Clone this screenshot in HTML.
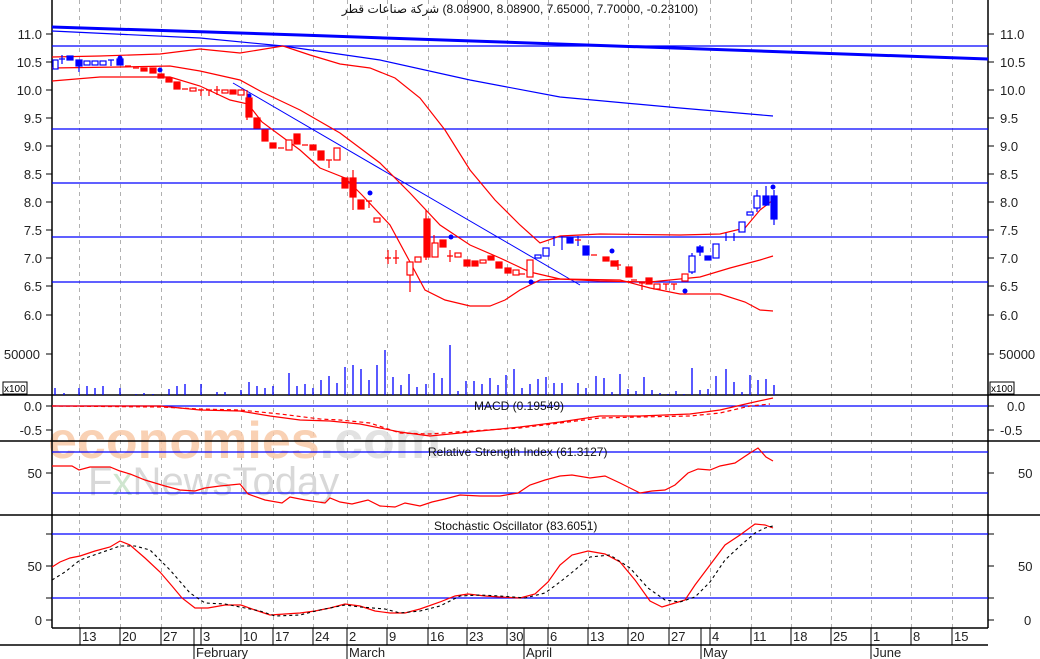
<!DOCTYPE html>
<html><head><meta charset="utf-8"><style>
html,body{margin:0;padding:0;background:#fff;width:1040px;height:659px;overflow:hidden;position:relative}
svg{display:block;font-family:"Liberation Sans","Noto Sans CJK SC",sans-serif}
#t{position:absolute;left:0;top:2px;width:1040px;text-align:center;font:12px "Liberation Sans","DejaVu Sans",sans-serif;color:#111;direction:ltr;unicode-bidi:isolate}
</style></head><body>
<svg width="1040" height="659" viewBox="0 0 1040 659" xmlns="http://www.w3.org/2000/svg">
<rect width="1040" height="659" fill="#fff"/>
<g stroke="#b0b0b0" stroke-dasharray="4,4" stroke-width="1">
<path d="M79.5 0V628M120.5 0V628M161.5 0V628M201.5 0V628M241.5 0V628M273.5 0V628M313.5 0V628M347.5 0V628M387.5 0V628M428.5 0V628M467.5 0V628M507.5 0V628M548.5 0V628M588.5 0V628M628.5 0V628M669.5 0V628M710.5 0V628M751.5 0V628M791.5 0V628M831.5 0V628M871.5 0V628M911.5 0V628M952.5 0V628"/>
</g>
<text x="48" y="458" font-size="52" fill="#f9c9a8" font-weight="bold" opacity="0.85">economies<tspan fill="#dedede">.com</tspan></text>
<text x="88" y="495" font-size="40" fill="#d8d8d8">F<tspan fill="#cfe6cf">x</tspan>NewsToday</text>
<g stroke="#000" stroke-width="1.5" fill="none">
<path d="M52 0V628M988 0V628M0 395H1040M0 441H1040M0 515H1040M52 628H988M0 645H988"/>
</g>
<g stroke="#000" stroke-width="1">
<path d="M46 34H52M46 62H52M46 90H52M46 118H52M46 146H52M46 174H52M46 202H52M46 230H52M46 258H52M46 286H52M46 315H52M46 354H52M46 406H52M46 430H52M46 473H52M46 566H52M46 620H52M46 598H52M46 534H52"/>
<path d="M988 34H994M988 62H994M988 90H994M988 118H994M988 146H994M988 174H994M988 202H994M988 230H994M988 258H994M988 286H994M988 315H994M988 354H994M988 406H994M988 430H994M988 473H994M988 566H994M988 620H994M988 598H994M988 534H994"/>
<path d="M80 628V645M120 628V645M161 628V645M194 628V659M201 628V645M241 628V645M273 628V645M313 628V645M347 628V659M387 628V645M428 628V645M467 628V645M507 628V645M524 628V659M548 628V645M588 628V645M628 628V645M669 628V645M701 628V659M710 628V645M751 628V645M791 628V645M831 628V645M871 628V659M911 628V645M952 628V645"/>
</g>
<g font-size="13" fill="#222" text-anchor="end">
<text x="42" y="39">11.0</text><text x="42" y="67">10.5</text><text x="42" y="95">10.0</text><text x="42" y="123">9.5</text><text x="42" y="151">9.0</text><text x="42" y="179">8.5</text><text x="42" y="207">8.0</text><text x="42" y="235">7.5</text><text x="42" y="263">7.0</text><text x="42" y="291">6.5</text><text x="42" y="320">6.0</text><text x="40" y="359">50000</text>
<text x="42" y="411">0.0</text><text x="42" y="435">-0.5</text><text x="42" y="478">50</text><text x="42" y="571">50</text><text x="42" y="625">0</text>
</g>
<g font-size="13" fill="#222">
<text x="1000" y="39">11.0</text><text x="1000" y="67">10.5</text><text x="1000" y="95">10.0</text><text x="1000" y="123">9.5</text><text x="1000" y="151">9.0</text><text x="1000" y="179">8.5</text><text x="1000" y="207">8.0</text><text x="1000" y="235">7.5</text><text x="1000" y="263">7.0</text><text x="1000" y="291">6.5</text><text x="1000" y="320">6.0</text><text x="999" y="359">50000</text>
<text x="1007" y="411">0.0</text><text x="1000" y="435">-0.5</text><text x="1018" y="478">50</text><text x="1018" y="571">50</text><text x="1024" y="625">0</text>
</g>
<rect x="3" y="382" width="24" height="12" fill="#fff" stroke="#000"/><text x="4" y="392" font-size="10">x100</text>
<rect x="990" y="382" width="24" height="12" fill="#fff" stroke="#000"/><text x="991" y="392" font-size="10">x100</text>
<g font-size="13" fill="#222">
<text x="82" y="641">13</text><text x="122" y="641">20</text><text x="163" y="641">27</text><text x="203" y="641">3</text><text x="243" y="641">10</text><text x="275" y="641">17</text><text x="315" y="641">24</text><text x="349" y="641">2</text><text x="389" y="641">9</text><text x="430" y="641">16</text><text x="469" y="641">23</text><text x="509" y="641">30</text><text x="550" y="641">6</text><text x="590" y="641">13</text><text x="630" y="641">20</text><text x="671" y="641">27</text><text x="712" y="641">4</text><text x="753" y="641">11</text><text x="793" y="641">18</text><text x="833" y="641">25</text><text x="873" y="641">1</text><text x="913" y="641">8</text><text x="954" y="641">15</text>
<text x="196" y="657">February</text><text x="349" y="657">March</text><text x="526" y="657">April</text><text x="703" y="657">May</text><text x="873" y="657">June</text>
</g>
<g stroke="#0000ff" stroke-width="1.3">
<path d="M52 46H988M52 129H988M52 183H988M52 237H988M52 282H988M52 406H988M52 452H988M52 493H988M52 534H988M52 598H988"/>
</g>
<path d="M52 27L300 35L988 59" stroke="#0000ff" stroke-width="3" fill="none"/>
<path d="M52 31L200 38L283 46L380 60L470 80L560 97L680 108L773 116" stroke="#0000ff" stroke-width="1.2" fill="none"/>
<path d="M233 83L580 285" stroke="#0000ff" stroke-width="1" fill="none"/>
<g stroke="#f00" stroke-width="1.2" fill="none">
<path d="M52 57L100 56L160 54L200 49L240 53L283 46L310 55L340 64L370 68L395 78L420 98L445 130L470 170L495 200L520 225L540 243L560 236L600 234L680 235L720 234L745 228L760 210L773 200"/>
<path d="M52 68L120 67L170 66L200 71L240 80L262 92L300 110L340 133L380 163L410 193L440 225L470 245L500 258L530 272L560 279L600 281L650 282L700 277L730 268L760 260L773 256"/>
<path d="M52 81L100 77L170 77L200 86L230 100L248 104L262 122L300 150L320 168L345 178L362 195L390 225L410 262L425 290L445 300L470 306L490 306L505 300L520 290L540 280L560 279L620 280L650 288L680 294L720 294L745 302L760 310L773 311"/>
</g>
<g fill="#0000ff" stroke="#0000ff" stroke-width="1.2">
<rect x="53" y="60" width="5" height="9" fill="#fff"/>
<path d="M62 55V64M59 59H65M79 60V72M111 60V66M108 60H114M554 236V246M562 236V250M578 236V246M692 253V274M700 245V256M726 233V241M734 233V241M757 190V212M766 186V206"/>
<rect x="67" y="56" width="6" height="4"/><rect x="76" y="60" width="6" height="6"/>
<rect x="84" y="61" width="6" height="4" fill="#fff"/><rect x="92" y="61" width="6" height="4" fill="#fff"/><rect x="100" y="61" width="6" height="4" fill="#fff"/>
<rect x="117" y="59" width="6" height="6"/>
<rect x="535" y="255" width="6" height="3" fill="#fff"/><rect x="543" y="248" width="6" height="8" fill="#fff"/>
<rect x="567" y="238" width="6" height="5"/><rect x="583" y="246" width="6" height="9"/>
<rect x="689" y="256" width="6" height="16" fill="#fff"/><rect x="697" y="247" width="6" height="5"/><rect x="705" y="256" width="6" height="4"/><rect x="713" y="244" width="6" height="14" fill="#fff"/>
<rect x="739" y="222" width="6" height="10" fill="#fff"/><rect x="747" y="212" width="6" height="3" fill="#fff"/><rect x="754" y="196" width="6" height="12" fill="#fff"/><rect x="763" y="196" width="6" height="9"/><rect x="771" y="196" width="6" height="23"/>
<path d="M774 190V225" />
</g>
<g fill="#0000ff">
<circle cx="120" cy="58" r="2.5"/><circle cx="160" cy="70" r="2.5"/><circle cx="249" cy="96" r="2.5"/><circle cx="370" cy="193" r="2.5"/><circle cx="451" cy="237" r="2.5"/><circle cx="531" cy="282" r="2.5"/><circle cx="612" cy="251" r="2.5"/><circle cx="685" cy="291" r="2.5"/><circle cx="773" cy="187" r="2.5"/>
</g>
<g fill="#f00" stroke="#f00" stroke-width="1.2">
<path d="M125 66H131M133 68H139M182 89H188M198 90H204M201 90V96M206 90H212M209 90V96M217 86V95M214 90H220M278 148H284M302 145H308M326 160H332M329 160V168M366 201H372M369 201V208M385 258H391M388 250V264M393 258H399M396 250V264M447 256H453M450 250V262M519 274H525M575 240H581M591 255H597M615 265H621M618 260V270M631 280H637M639 283H645M642 283V290M663 284H669M666 284V290M671 284H677M674 284V290M410 262V292M426 210V260M434 235V255M353 170V210M247 90V120"/>
<rect x="141" y="68" width="6" height="3"/><rect x="150" y="68" width="6" height="5"/><rect x="158" y="74" width="6" height="4"/><rect x="166" y="78" width="6" height="4"/><rect x="174" y="82" width="6" height="7"/>
<rect x="190" y="88" width="6" height="3" fill="#fff"/><rect x="222" y="90" width="6" height="3" fill="#fff"/><rect x="230" y="90" width="6" height="4"/><rect x="238" y="90" width="6" height="5" fill="#fff"/>
<rect x="246" y="98" width="6" height="19"/><rect x="254" y="118" width="6" height="10"/><rect x="262" y="130" width="6" height="11"/><rect x="270" y="143" width="6" height="5"/>
<rect x="286" y="140" width="6" height="10" fill="#fff"/><rect x="294" y="134" width="6" height="10"/><rect x="310" y="145" width="6" height="5"/><rect x="318" y="151" width="6" height="9"/><rect x="334" y="148" width="6" height="12" fill="#fff"/>
<rect x="342" y="178" width="6" height="10"/><rect x="350" y="178" width="6" height="19"/><rect x="358" y="200" width="6" height="9"/><rect x="374" y="218" width="6" height="4" fill="#fff"/>
<rect x="407" y="262" width="6" height="13" fill="#fff"/><rect x="415" y="257" width="6" height="5" fill="#fff"/><rect x="424" y="219" width="6" height="38"/><rect x="432" y="243" width="6" height="14" fill="#fff"/><rect x="440" y="240" width="6" height="7"/>
<rect x="455" y="253" width="6" height="4" fill="#fff"/><rect x="464" y="260" width="6" height="6"/><rect x="472" y="261" width="6" height="5"/><rect x="480" y="260" width="6" height="3" fill="#fff"/><rect x="488" y="256" width="6" height="4"/><rect x="496" y="262" width="6" height="6"/><rect x="505" y="268" width="6" height="5"/><rect x="513" y="270" width="6" height="5" fill="#fff"/><rect x="527" y="260" width="6" height="17" fill="#fff"/>
<rect x="603" y="257" width="6" height="4"/><rect x="611" y="261" width="6" height="5"/><rect x="626" y="267" width="6" height="10"/><rect x="646" y="278" width="6" height="6"/><rect x="654" y="284" width="6" height="5" fill="#fff"/><rect x="682" y="274" width="6" height="7" fill="#fff"/>
</g>
<g stroke="#0000ff" stroke-width="1.3">
<path d="M55 388V395M64 393V395M79 388V395M87 386V395M95 388V395M103 386V395M120 388V395M136 394V395M144 393V395M153 394V395M169 389V395M177 386V395M185 384V395M201 384V395M217 392V395M225 392V395M241 390V395M249 382V395M257 386V395M265 388V395M273 386V395M289 373V395M297 386V395M305 384V395M313 388V395M321 380V395M329 376V395M337 383V395M345 367V395M353 365V395M361 369V395M369 380V395M377 365V395M385 350V395M393 377V395M401 385V395M409 374V395M417 387V395M426 384V395M434 373V395M442 378V395M450 345V395M458 391V395M466 381V395M474 381V395M482 384V395M490 378V395M498 385V395M506 375V395M514 369V395M522 388V395M530 384V395M538 379V395M546 377V395M554 383V395M562 383V395M578 383V395M586 388V395M596 376V395M604 378V395M612 392V395M620 374V395M628 389V395M636 391V395M644 377V395M652 390V395M660 393V395M668 394V395M676 391V395M684 394V395M692 368V395M700 390V395M708 389V395M716 376V395M726 369V395M734 382V395M742 392V395M750 375V395M758 380V395M766 379V395M774 385V395"/>
</g>
<path d="M52 406L160 406L200 410L240 411L270 416L300 420L330 421L360 424L400 432L430 436L470 432L520 427L560 422L600 416L640 416L690 414L720 410L750 403L773 398" stroke="#f00" stroke-width="1.2" fill="none"/>
<path d="M52 406L160 407L200 409L240 410L280 414L320 419L340 420L370 423L400 433L430 434L470 431L520 428L560 423L600 418L640 417L690 416L720 413L750 406L770 404" stroke="#f00" stroke-width="1.2" fill="none" stroke-dasharray="4,3"/>
<text x="474" y="410" font-size="12" fill="#111">MACD (0.19549)</text>
<path d="M52 466L72 466L79 470L90 467L110 467L120 471L130 474L145 480L165 486L180 490L195 491L205 488L220 486L240 484L248 494L265 500L282 503L290 497L305 500L325 503L330 498L340 502L352 504L368 500L380 506L395 507L405 503L420 506L432 502L445 499L460 495L480 496L500 496L518 493L530 485L545 480L560 476L572 475L590 478L605 476L620 483L640 493L652 491L665 490L675 485L688 473L698 469L710 470L720 466L735 463L750 453L758 448L766 457L773 461" stroke="#f00" stroke-width="1.2" fill="none"/>
<text x="428" y="456" font-size="12" fill="#111">Relative Strength Index (61.3127)</text>
<path d="M52 567L60 562L70 558L80 556L95 551L110 547L120 541L130 545L145 558L160 572L172 586L182 598L195 608L208 608L225 605L241 605L255 610L270 615L285 614L300 613L315 611L330 608L345 604L360 606L375 611L390 613L405 613L420 609L440 602L455 596L468 594L485 596L500 597L520 598L535 594L548 582L560 565L572 555L588 551L605 554L620 562L635 580L650 601L662 607L675 603L685 600L695 585L710 565L725 545L740 535L755 524L765 525L773 528" stroke="#f00" stroke-width="1.2" fill="none"/>
<path d="M52 580L65 572L80 560L100 553L120 546L135 546L150 550L170 570L190 593L205 603L225 604L245 608L260 611L275 616L300 615L320 610L345 605L360 607L385 609L400 613L420 611L440 606L460 596L480 595L500 596L525 598L545 593L560 582L575 570L590 557L610 555L630 568L648 588L665 600L680 602L695 597L710 582L725 560L740 546L755 533L765 528L773 526" stroke="#000" stroke-width="1.1" fill="none" stroke-dasharray="3,3"/>
<text x="434" y="530" font-size="12" fill="#111">Stochastic Oscillator (83.6051)</text>
</svg>
<div id="t" dir="ltr"><bdi>شركة صناعات قطر</bdi> (8.08900, 8.08900, 7.65000, 7.70000, -0.23100)</div>
</body></html>
